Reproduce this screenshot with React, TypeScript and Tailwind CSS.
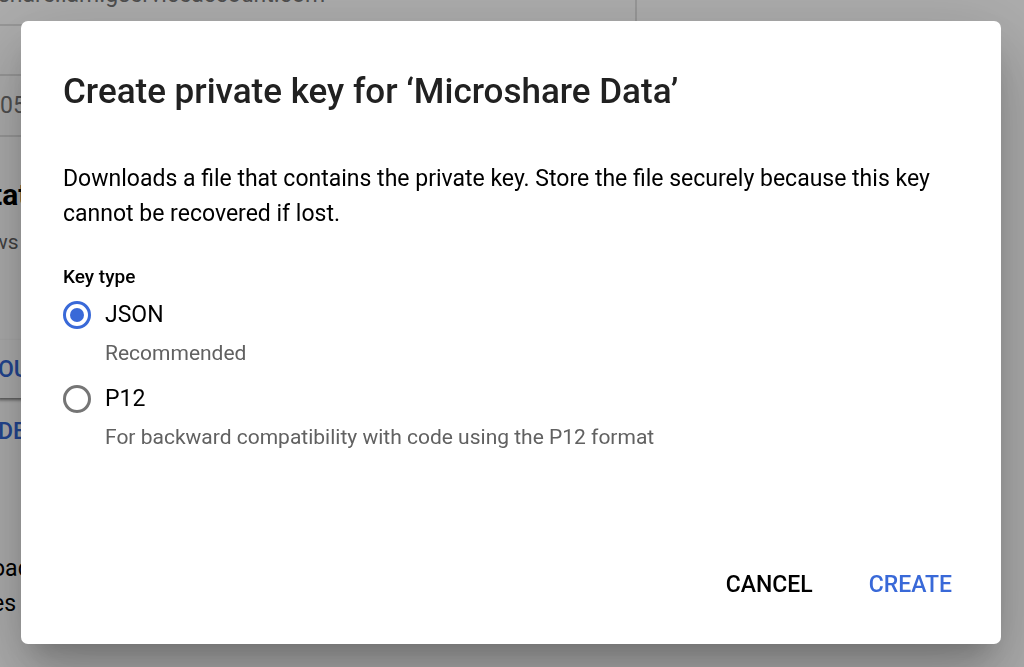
import { useState } from "react";

const keyTypes = [
  { id: "json", label: "JSON", hint: "Recommended" },
  {
    id: "p12",
    label: "P12",
    hint: "For backward compatibility with code using the P12 format",
  },
];

function AccountPage() {
  return (
    <main
      aria-hidden="true"
      className="h-screen overflow-hidden bg-white text-[23px] leading-[35px] text-black"
    >
      <div className="-ml-2 flow-root h-[26px] w-[645px] border-r-2 border-b-2 border-black/12 pl-1.5 text-[#757575]">
        <p className="-mt-[23px]">share.iam.gserviceaccount.com</p>
      </div>
      <div className="mt-12 flex h-[63px] max-w-[637px] items-center border-y-2 border-black/12 text-[#757575]">
        05
      </div>
      <h1 className="mt-10 -ml-2 text-[30px] leading-[35px] font-bold">
        tatus
      </h1>
      <p className="mt-[13px] -ml-2 text-[21px] text-[#616161]">ws</p>
      <div className="mt-20 -ml-0.5 flex h-[58px] w-[200px] items-center font-medium text-[#3367d6] shadow-[0_2px_3px_rgba(0,0,0,0.5)]">
        OUNT
      </div>
      <p className="mt-4 -ml-0.5 font-medium text-[#3367d6]">DELETE</p>
      <p className="mt-[102px] -ml-2">
        oad
        <br />
        es
      </p>
    </main>
  );
}

export default function App() {
  const [selected, setSelected] = useState("json");

  return (
    <div className="font-[Roboto,sans-serif]">
      <AccountPage />
      <div className="fixed inset-0 flex bg-black/32 pt-[21px] pr-[23px] pb-[23px] pl-[21px]">
        <form
          role="dialog"
          aria-labelledby="dialog-title"
          onSubmit={(event) => event.preventDefault()}
          className="flex w-full flex-col rounded-[7px] bg-white pt-[43px] pb-7 text-[23px] leading-[35px] text-black shadow-[0_19px_26px_-12px_rgba(0,0,0,0.2),0_42px_66px_5px_rgba(0,0,0,0.14),0_16px_80px_14px_rgba(0,0,0,0.12)]"
        >
          <div className="px-[42px]">
            <h2
              id="dialog-title"
              className="text-[35px] leading-[56px] font-medium text-[#212121]"
            >
              Create private key for ‘Microshare Data’
            </h2>
            <p className="mt-[41px]">
              Downloads a file that contains the private key. Store the file
              securely because this key cannot be recovered if lost.
            </p>
            <fieldset className="mt-8">
              <legend className="text-[19px] leading-[28px] font-medium">
                Key type
              </legend>
              <div className="mt-1.5 flex flex-col gap-[7px]">
                {keyTypes.map((type) => (
                  <div key={type.id}>
                    <div className="flex items-center gap-[14px]">
                      <input
                        type="radio"
                        id={type.id}
                        name="key-type"
                        checked={selected === type.id}
                        onChange={() => setSelected(type.id)}
                        aria-describedby={`${type.id}-hint`}
                        className="grid size-7 shrink-0 appearance-none place-items-center rounded-full border-3 border-[#757575] before:size-[14px] before:rounded-full checked:border-[#3969d8] checked:before:bg-[#3969d8]"
                      />
                      <label htmlFor={type.id}>{type.label}</label>
                    </div>
                    <p
                      id={`${type.id}-hint`}
                      className="pl-[42px] text-[21px] leading-[42px] text-[#616161]"
                    >
                      {type.hint}
                    </p>
                  </div>
                ))}
              </div>
            </fieldset>
          </div>
          <div className="mt-auto flex justify-end gap-7 pr-[35px] font-medium">
            <button type="button" className="h-[63px] px-[14px]">
              CANCEL
            </button>
            <button type="submit" className="h-[63px] px-[14px] text-[#3969d8]">
              CREATE
            </button>
          </div>
        </form>
      </div>
    </div>
  );
}
